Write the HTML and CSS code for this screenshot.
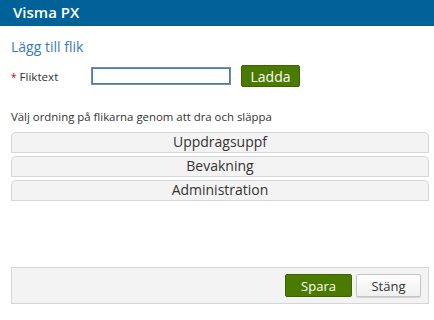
FILE: index.html
```html
<!DOCTYPE html>
<html>
  <head>
    <meta charset="UTF-8">
    <title>Visma PX</title>
    <link rel="stylesheet" href="styles.css">
  </head>
  <body>
    <div class="titlebar">Visma PX</div>
    <div class="content">
      <h2>Lägg till flik</h2>
      <div class="form-row">
        <label for="fliktext"><span class="req">*</span> Fliktext</label>
        <input id="fliktext" type="text" class="focused">
        <button class="btn btn-green">Ladda</button>
      </div>
      <p class="hint">Välj ordning på flikarna genom att dra och släppa</p>
      <ul class="tabs">
        <li>Uppdragsuppf</li>
        <li>Bevakning</li>
        <li>Administration</li>
      </ul>
      <div class="footer">
        <button class="btn btn-green">Spara</button>
        <button class="btn btn-white">Stäng</button>
      </div>
    </div>
  </body>
</html>
```

FILE: styles.css
```css
body {
    margin: 0;
    font-family: "Open Sans", sans-serif;
    color: #333;
    background: white;
}
.titlebar {
    background: #006299;
    color: white;
    height: 26px;
    line-height: 25px;
    padding-left: 13px;
    font-size: 15px;
    font-weight: 600;
}
.content {
    padding: 0 5px 0 11px;
}
h2 {
    margin: 11px 0 0 0;
    font-size: 14px;
    font-weight: normal;
    color: #3d7ab8;
    line-height: 20px;
}
.form-row {
    display: flex;
    align-items: center;
    margin-top: 7px;
    height: 24px;
}
label {
    font-size: 11.6px;
    width: 80px;
}
.req {
    color: #c00;
    font-size: 10px;
}
input {
    width: 140px;
    height: 18px;
    box-sizing: border-box;
    border: 1px solid #888;
    padding: 0 2px;
    margin: 0;
    font-family: inherit;
}
input.focused {
    box-shadow: inset 0 0 0 1px #3c7fc4;
}
.btn {
    font-family: inherit;
    font-size: 13px;
    border-radius: 2px;
    height: 22px;
    padding: 0;
    cursor: pointer;
}
.btn-green {
    background: #4a7b00;
    border: 1px solid #3b6300;
    color: white;
}
.form-row .btn {
    margin-left: 10px;
    width: 59px;
    font-size: 14px;
}
.hint {
    font-size: 11.4px;
    margin: 21px 0 0 0;
    line-height: 16px;
}
.tabs {
    list-style: none;
    margin: 7px 0 0 0;
    padding: 0;
}
.tabs li {
    background: #f3f3f3;
    border: 1px solid #d6d6d6;
    border-radius: 5px 5px 0 0;
    height: 21px;
    box-sizing: border-box;
    text-align: center;
    font-size: 14px;
    line-height: 18px;
    margin-bottom: 3px;
}
.footer {
    margin-top: 66px;
    height: 37px;
    box-sizing: border-box;
    background: #f3f3f3;
    border: 1px solid #d6d6d6;
    display: flex;
    justify-content: flex-end;
    align-items: center;
    gap: 4px;
    padding-right: 7px;
}
.footer .btn {
    height: 23px;
}
.footer .btn-green {
    width: 67px;
}
.btn-white {
    width: 65px;
    background: linear-gradient(#ffffff, #f0f0f0);
    border: 1px solid #c6c6c6;
    color: #333;
    box-shadow: 0 1px 1px rgba(0,0,0,0.15);
}
```
